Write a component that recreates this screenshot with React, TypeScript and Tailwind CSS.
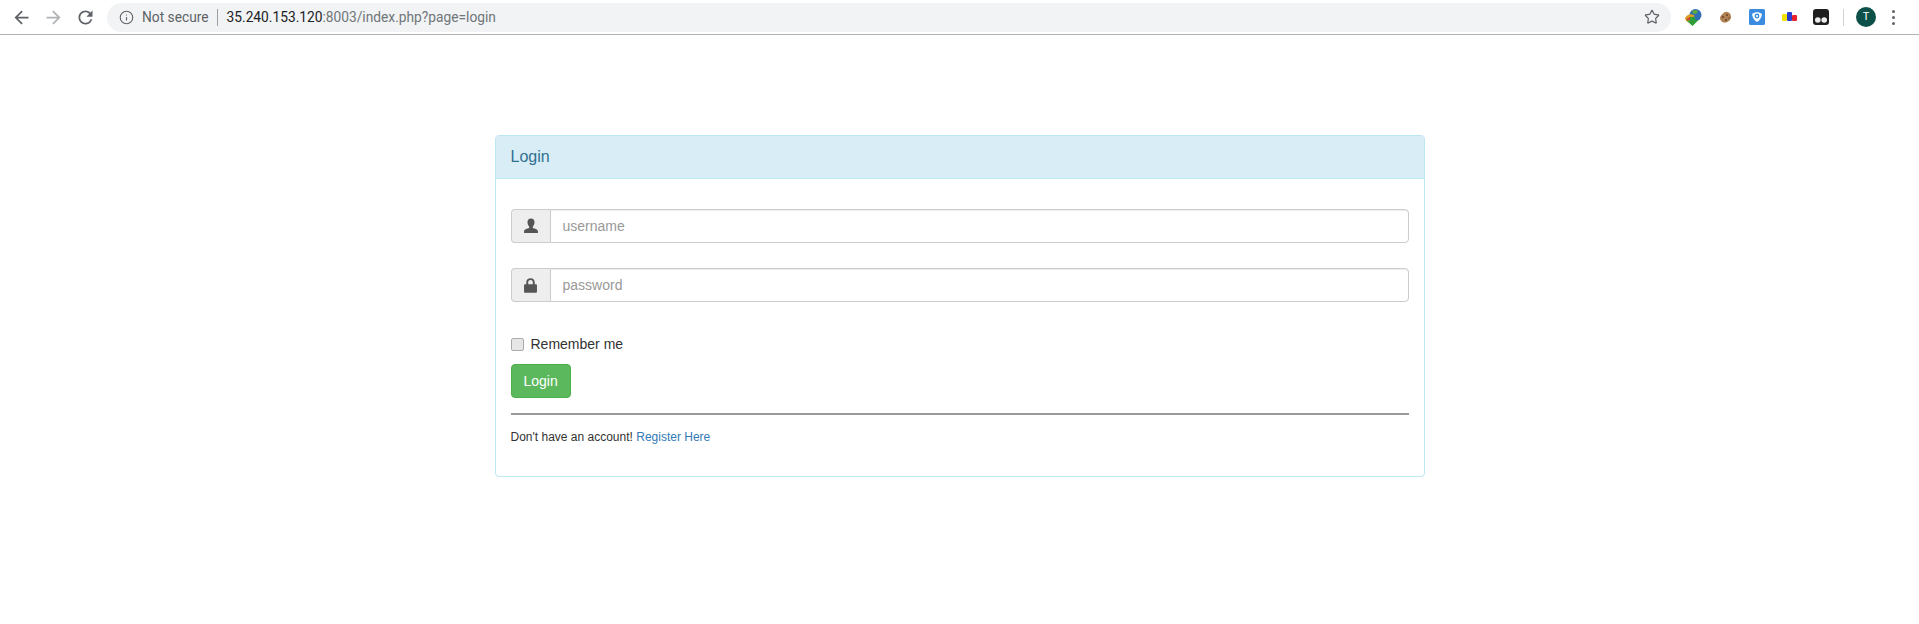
import { Info, Star } from 'lucide-react';

const arial = 'font-["Liberation_Sans",Arial,sans-serif]';

function ChromeBar() {
  return (
    <div className="flex h-[35px] items-center border-b border-[#b5b1b5] bg-white font-['Roboto',sans-serif]">
      <div className="flex w-[107px] items-center pl-[11px] text-[#5f6368]">
        <svg width="21" height="21" viewBox="0 0 24 24" fill="currentColor">
          <path d="M20 11H7.830l5.590-5.590L12 4l-8 8 8 8 1.410-1.410L7.830 13H20z" />
        </svg>
        <svg width="21" height="21" viewBox="0 0 24 24" fill="currentColor" className="ml-[11px] text-[#b0b3b6]">
          <path d="M4 11h12.170l-5.590-5.590L12 4l8 8-8 8-1.410-1.410L16.170 13H4z" />
        </svg>
        <svg width="21" height="21" viewBox="0 0 24 24" fill="currentColor" className="ml-[11px]">
          <path d="M17.650 6.350A7.960 7.960 0 0 0 12 4c-4.420 0-7.990 3.580-7.990 8s3.570 8 7.990 8c3.730 0 6.840-2.550 7.730-6h-2.080A5.990 5.990 0 0 1 12 18c-3.310 0-6-2.690-6-6s2.690-6 6-6c1.660 0 3.140.69 4.220 1.780L13 11h7V4z" />
        </svg>
      </div>
      <div className="flex h-[29px] w-[1564px] items-center rounded-full bg-[#f1f3f4] pl-[12px] pr-[11px] text-[13.75px]">
        <Info size={15} strokeWidth={1.8} className="text-[#5f6368]" />
        <span className="ml-[8px] text-[#5f6368]">Not secure</span>
        <span className="ml-[8px] h-[17px] w-px bg-[#9aa0a6]" />
        <span className="ml-[9px] text-[#202124]">35.240.153.120<span className="text-[#70757a]">:8003/index.php?page=login</span></span>
        <Star size={16} strokeWidth={1.8} className="ml-auto text-[#5f6368]" />
      </div>
      <div className="flex flex-1 items-center pl-[13px]">
        <svg width="19" height="19" viewBox="0 0 19 19">
          <circle cx="11.500" cy="7" r="6" fill="#2f6fb5" />
          <path d="M8 3c2-1.500 5-1 6 0l-2 3-3-.5z" fill="#5fa83c" />
          <path d="M1 10c2-4 7-5 10-2l-4 2 2 6-7-3z" fill="#d8a020" />
          <path d="M2 12c1-2 3-3 5-3l-1 3z" fill="#d8403a" />
          <path d="M6 9h5v3h3.500l-6 6-6-5.500h3.500z" fill="#2f9e36" />
        </svg>
        <svg width="15" height="15" viewBox="0 0 15 15" className="ml-[15px]">
          <path d="M7.500 2c1.500-.5 4 .5 5 2.500s.5 4.500-1 6-4 2.500-6 2-3.500-2.500-3.500-4.500 1.500-3 2.500-4 1.500-2 3-2z" fill="#b08055" />
          <circle cx="5" cy="7" r="1" fill="#6e4526" />
          <circle cx="8" cy="10" r="1" fill="#6e4526" />
          <circle cx="9" cy="5" r="1" fill="#6e4526" />
          <circle cx="11" cy="8" r=".8" fill="#6e4526" />
        </svg>
        <svg width="16" height="16" viewBox="0 0 16 16" className="ml-[16px]">
          <rect width="16" height="16" rx="1.500" fill="#3b8be0" />
          <path d="M3 5c3-2.500 7-2.500 10 0-.5 4-2.500 6.500-5 8-2.500-1.500-4.500-4-5-8z" fill="#fff" />
          <circle cx="8" cy="7" r="2.400" fill="#3b8be0" />
          <circle cx="8" cy="7" r="1.100" fill="#fff" />
        </svg>
        <svg width="15" height="10" viewBox="0 0 15 10" className="ml-[17px]">
          <rect x="0" y="2" width="5" height="7" rx="1" fill="#f5e100" />
          <rect x="5" y="0" width="5" height="9" rx="1" fill="#2a3fd0" />
          <rect x="10" y="3" width="5" height="6" rx="1" fill="#e8202a" />
        </svg>
        <svg width="16" height="16" viewBox="0 0 16 16" className="ml-[16px]">
          <rect width="16" height="16" rx="3" fill="#1f1f1f" />
          <circle cx="4.800" cy="11" r="2.800" fill="#eee" />
          <circle cx="11.200" cy="11" r="2.800" fill="#eee" />
        </svg>
        <span className="ml-[14px] h-[17px] w-px bg-[#d0d2d4]" />
        <span className="ml-[12px] flex h-[20px] w-[20px] items-center justify-center rounded-full bg-[#0d5049] text-[11px] text-white">T</span>
        <span className="ml-[16px] flex flex-col gap-[3px]">
          <span className="h-[3px] w-[3px] rounded-full bg-[#5f6368]" />
          <span className="h-[3px] w-[3px] rounded-full bg-[#5f6368]" />
          <span className="h-[3px] w-[3px] rounded-full bg-[#5f6368]" />
        </span>
      </div>
    </div>
  );
}

function InputRow({ placeholder, icon }: { placeholder: string; icon: React.ReactNode }) {
  return (
    <div className="flex h-[34px]">
      <span className="flex w-[39px] items-center justify-center rounded-l-[4px] border border-r-0 border-[#cccccc] bg-[#eeeeee] text-[#555555]">{icon}</span>
      <input
        placeholder={placeholder}
        className="flex-1 rounded-r-[4px] border border-[#cccccc] bg-white px-[12px] text-[14px] text-[#555555] shadow-[inset_0_1px_1px_rgba(0,0,0,0.075)] outline-none placeholder:text-[#999999]"
      />
    </div>
  );
}

export default function App() {
  return (
    <div className={`min-h-[624px] bg-white ${arial}`}>
      <ChromeBar />
      <div className="mx-auto mt-[100px] w-[930px] rounded-[4px] border border-[#bce8f1] bg-white">
        <div className="flex h-[43px] items-center rounded-t-[3px] border-b border-[#bce8f1] bg-[#d9edf7] px-[15px] text-[16px] text-[#31708f]">Login</div>
        <div className="px-[15px] pt-[30px]">
          <InputRow
            placeholder="username"
            icon={
              <svg width="16" height="16" viewBox="0 0 15 15" fill="currentColor">
                <path d="M7.500 0.500c2.200 0 3.300 1.500 3.300 3.600 0 1.700-.8 3.200-1.600 4v1.200c2 .6 4.800 1.300 4.800 3.200v1.500H1v-1.500c0-1.900 2.800-2.600 4.800-3.200V8.100C5 7.300 4.200 5.800 4.200 4.100c0-2.100 1.100-3.600 3.300-3.600z" />
              </svg>
            }
          />
          <div className="mt-[25px]">
            <InputRow
              placeholder="password"
              icon={
                <svg width="17" height="17" viewBox="0 0 15 15" fill="currentColor">
                  <path fillRule="evenodd" d="M3.800 6.500V4.500C3.800 2.300 5.300 1 7.500 1s3.700 1.300 3.700 3.500v2h1c.6 0 1 .4 1 1v5.500c0 .6-.4 1-1 1H2.800c-.6 0-1-.4-1-1V7.500c0-.6.4-1 1-1zM5.500 6.500h4v-2C9.500 3.300 8.700 2.700 7.500 2.700s-2 .6-2 1.800z" />
                </svg>
              }
            />
          </div>
          <label className="mt-[32px] flex items-center text-[14px] leading-[20px] text-[#333333]">
            <input type="checkbox" className="h-[13px] w-[13px] appearance-none rounded-[2px] border border-[#ababab] bg-[#e6e6e6]" />
            <span className="ml-[7px]">Remember me</span>
          </label>
          <button className="mt-[10px] block h-[34px] rounded-[4px] border border-[#4cae4c] bg-[#5cb85c] px-[12px] text-[14px] text-white">Login</button>
          <hr className="mt-[15px] border-t-2 border-[#999999]" />
          <p className="mt-[14px] pb-[30px] text-[12px] leading-[17px] text-[#333333]">
            Don't have an account! <a className="text-[#337ab7]">Register Here</a>
          </p>
        </div>
      </div>
    </div>
  );
}
